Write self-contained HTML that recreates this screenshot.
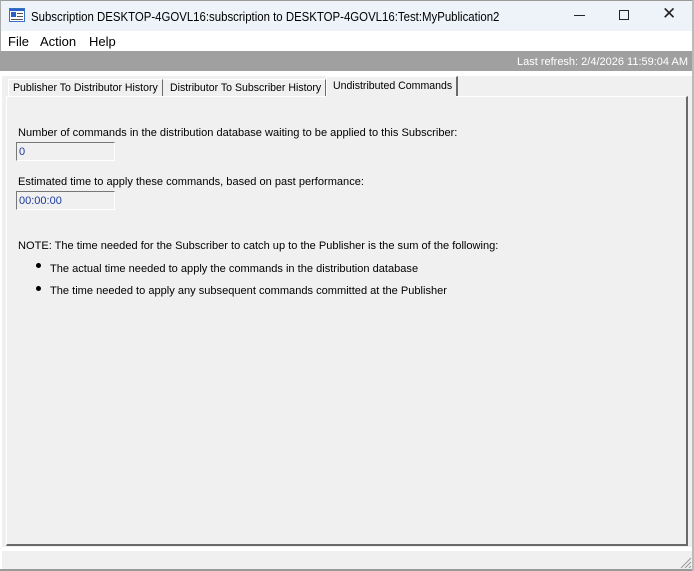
<!DOCTYPE html>
<html><head><style>
*{margin:0;padding:0;box-sizing:border-box}
body{width:694px;height:571px;overflow:hidden;background:#f0f0f0;font-family:"Liberation Sans",sans-serif;font-size:11px;color:#000;position:relative}
.a{position:absolute;white-space:nowrap}
.c{transform-origin:0 0;transform:scaleX(0.96)}
.d{transform-origin:0 0;transform:scaleX(1.005)}
</style></head><body>
<div class="a" style="left:0;top:0;width:694px;height:31px;background:#eef3f9;border-top:1px solid #999;border-left:1px solid #aaa;border-right:1px solid #aaa"></div>
<svg class="a" style="left:9px;top:8px" width="16" height="14"><rect x="0.5" y="0.5" width="15" height="13" fill="#fff" stroke="#3a6fc4"/><rect x="1" y="1" width="14" height="2" fill="#2a63c8"/><rect x="2" y="4" width="5" height="5" fill="#2a63c8"/><rect x="8" y="5" width="6" height="1" fill="#555"/><rect x="8" y="8" width="6" height="1" fill="#555"/><rect x="2" y="11" width="12" height="1" fill="#555"/></svg>
<div class="a" style="left:31px;top:9px;font-size:13px;transform-origin:0 0;transform:scaleX(0.878)">Subscription DESKTOP-4GOVL16:subscription to DESKTOP-4GOVL16:Test:MyPublication2</div>
<div class="a" style="left:574px;top:15px;width:11px;height:1px;background:#222"></div>
<div class="a" style="left:619px;top:10px;width:10px;height:10px;border:1px solid #222"></div>
<div class="a" style="left:662px;top:4px;font-size:17px;color:#222">✕</div>
<div class="a" style="left:0;top:31px;width:694px;height:20px;background:#fff;border-left:1px solid #aaa;border-right:1px solid #aaa"></div>
<div class="a" style="left:8px;top:34px;font-size:13px">File</div>
<div class="a" style="left:40px;top:34px;font-size:13px">Action</div>
<div class="a" style="left:89px;top:34px;font-size:13px">Help</div>
<div class="a" style="left:0;top:51px;width:694px;height:20px;background:#a0a0a0"></div>
<div class="a" style="right:6px;top:56px;color:#fff;font-size:11px">Last refresh: 2/4/2026 11:59:04 AM</div>
<div class="a" style="left:0;top:71px;width:694px;height:5px;background:#fff"></div>
<div class="a" style="left:0;top:71px;width:2px;height:500px;background:#fff"></div>
<div class="a" style="left:8px;top:79px;width:155px;height:18px;background:#f0f0f0;border-top:1px solid #fff;border-left:1px solid #fff;border-right:1px solid #6a6a6a"></div>
<div class="a c" style="left:13px;top:82px">Publisher To Distributor History</div>
<div class="a" style="left:164px;top:79px;width:162px;height:18px;background:#f0f0f0;border-top:1px solid #fff;border-right:1px solid #6a6a6a"></div>
<div class="a c" style="left:170px;top:82px">Distributor To Subscriber History</div>
<div class="a" style="left:326px;top:76px;width:132px;height:21px;background:#f0f0f0;border-top:1px solid #fff;border-left:1px solid #fff;border-right:2px solid #6a6a6a"></div>
<div class="a c" style="left:333px;top:80px">Undistributed Commands</div>
<div class="a" style="left:6px;top:96px;width:682px;height:450px;border-left:1px solid #fff;border-top:1px solid #fff;border-right:2px solid #6a6a6a;border-bottom:2px solid #6a6a6a"></div>
<div class="a" style="left:326px;top:96px;width:130px;height:2px;background:#f0f0f0"></div>
<div class="a d" style="left:18px;top:127px">Number of commands in the distribution database waiting to be applied to this Subscriber:</div>
<div class="a" style="left:16px;top:142px;width:99px;height:19px;border-top:1px solid #777;border-left:1px solid #777;border-bottom:1px solid #fff;border-right:1px solid #fff;padding:3px 2px;color:#1a3a9a">0</div>
<div class="a d" style="left:18px;top:176px">Estimated time to apply these commands, based on past performance:</div>
<div class="a" style="left:16px;top:191px;width:99px;height:19px;border-top:1px solid #777;border-left:1px solid #777;border-bottom:1px solid #fff;border-right:1px solid #fff;padding:3px 2px;color:#1a3a9a">00:00:00</div>
<div class="a d" style="left:18px;top:240px">NOTE: The time needed for the Subscriber to catch up to the Publisher is the sum of the following:</div>
<div class="a" style="left:36px;top:263px;width:5px;height:5px;border-radius:50%;background:#000"></div>
<div class="a d" style="left:50px;top:263px">The actual time needed to apply the commands in the distribution database</div>
<div class="a" style="left:36px;top:286px;width:5px;height:5px;border-radius:50%;background:#000"></div>
<div class="a d" style="left:50px;top:285px">The time needed to apply any subsequent commands committed at the Publisher</div>
<div class="a" style="left:0;top:547px;width:694px;height:4px;background:#fff"></div>
<div class="a" style="left:0;top:569px;width:694px;height:2px;background:#999"></div>
<div class="a" style="left:692px;top:0;width:2px;height:571px;background:#bbb"></div>
<svg class="a" style="left:680px;top:557px" width="12" height="12"><path d="M11 1L1 11M11 5L5 11M11 9L9 11" stroke="#999" stroke-width="1"/></svg>
</body></html>
